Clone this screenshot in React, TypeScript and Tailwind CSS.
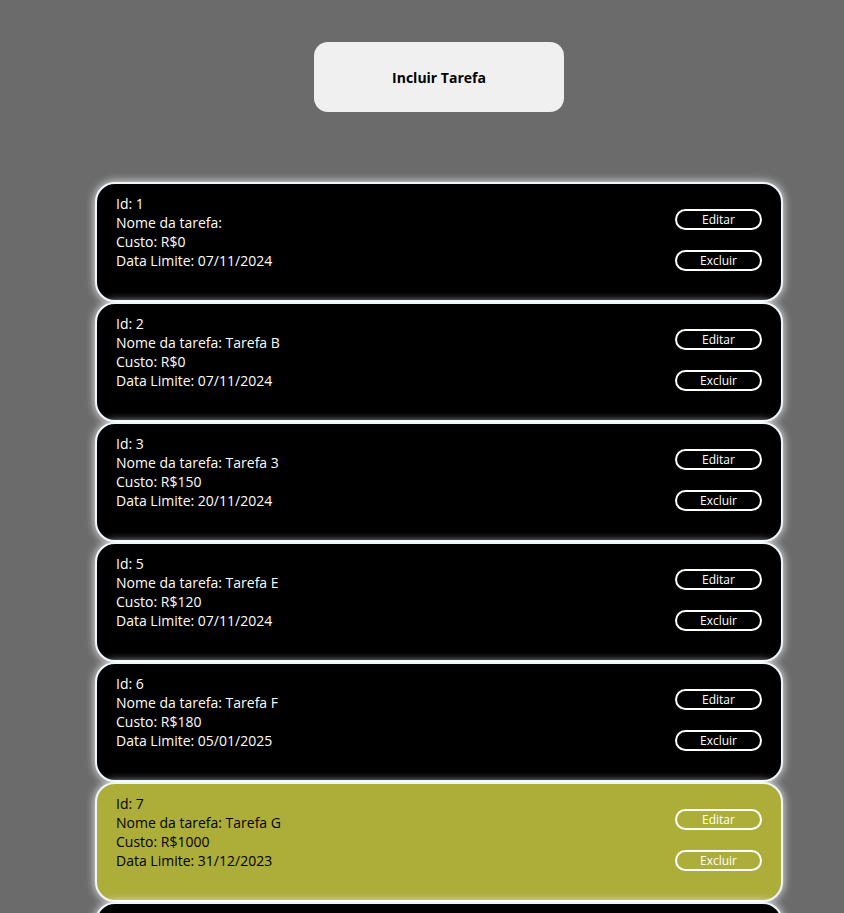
import React from 'react';

interface Task {
  id: number;
  nome: string;
  custo: number;
  data: string;
  vencida?: boolean;
}

const TAREFAS: Task[] = [
  { id: 1, nome: '', custo: 0, data: '07/11/2024' },
  { id: 2, nome: 'Tarefa B', custo: 0, data: '07/11/2024' },
  { id: 3, nome: 'Tarefa 3', custo: 150, data: '20/11/2024' },
  { id: 5, nome: 'Tarefa E', custo: 120, data: '07/11/2024' },
  { id: 6, nome: 'Tarefa F', custo: 180, data: '05/01/2025' },
  { id: 7, nome: 'Tarefa G', custo: 1000, data: '31/12/2023', vencida: true },
];

export default function App() {
  return (
    <div className="h-[913px] overflow-hidden bg-[#6b6b6b] pt-[42px] font-['Open_Sans',sans-serif]">
      {/* Botão de inclusão */}
      <div className="flex justify-center pl-[34px]">
        <button className="w-[250px] h-[70px] rounded-[14px] bg-[#f0f0f0] text-[14px] font-bold text-black">
          Incluir Tarefa
        </button>
      </div>

      {/* Lista de tarefas */}
      <div className="mt-[70px] ml-[95px] w-[688px] flex flex-col">
        {TAREFAS.map((t) => (
          <div
            key={t.id}
            className={`h-[120px] rounded-[20px] border-2 border-[#eef6fb] shadow-[0_0_10px_rgba(255,255,255,0.9)] flex justify-between pl-[19px] pr-[19px] pt-[10px] ${
              t.vencida ? 'bg-[#adad3a] text-black' : 'bg-black text-white'
            }`}
          >
            <div className="text-[14px] leading-[19px]">
              <p>Id: {t.id}</p>
              <p>Nome da tarefa: {t.nome}</p>
              <p>Custo: R${t.custo}</p>
              <p>Data Limite: {t.data}</p>
            </div>
            <div className="flex flex-col gap-[20px] pt-[15px]">
              <button className="w-[87px] h-[21px] rounded-full border-2 border-white text-white text-[12px] leading-none">
                Editar
              </button>
              <button className="w-[87px] h-[21px] rounded-full border-2 border-white text-white text-[12px] leading-none">
                Excluir
              </button>
            </div>
          </div>
        ))}
        {/* próximo card, fora da área visível */}
        <div className="h-[120px] rounded-[20px] border-2 border-[#eef6fb] shadow-[0_0_10px_rgba(255,255,255,0.9)] bg-black" />
      </div>
    </div>
  );
}
